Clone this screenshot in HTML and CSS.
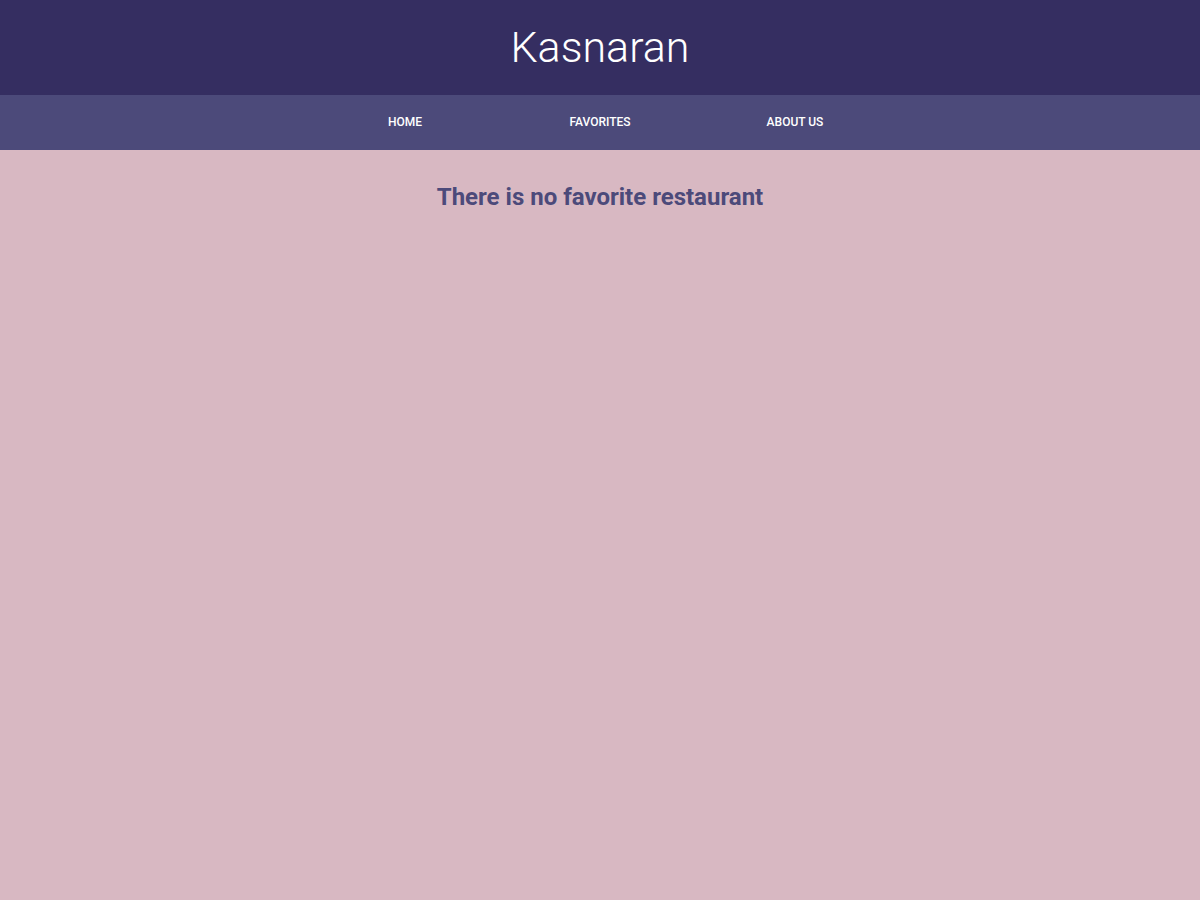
FILE: index.html
```html
<!DOCTYPE html>
<html lang="en">
<head>
<meta charset="utf-8">
<title>Kasnaran</title>
<link rel="stylesheet" href="styles.css">
</head>
<body>
<header class="app-bar">
  <h1 class="app-title">Kasnaran</h1>
</header>
<nav class="nav">
  <ul class="nav-list">
    <li class="nav-item"><a href="#" class="nav-link">HOME</a></li>
    <li class="nav-item"><a href="#" class="nav-link">FAVORITES</a></li>
    <li class="nav-item"><a href="#" class="nav-link">ABOUT US</a></li>
  </ul>
</nav>
<main class="content">
  <h2 class="empty-msg">There is no favorite restaurant</h2>
</main>
</body>
</html>
```

FILE: styles.css
```css
html, body {
  margin: 0;
  padding: 0;
  height: 100%;
}
body {
  background: #d8b8c2;
  font-family: Roboto, "Liberation Sans", sans-serif;
}
.app-bar {
  background: #352e61;
  height: 95px;
  display: flex;
  align-items: center;
  justify-content: center;
}
.app-title {
  margin: 0;
  color: #ffffff;
  font-weight: 300;
  font-size: 43px;
  line-height: 1;
}
.nav {
  background: #4c4a7a;
  height: 55px;
}
.nav-list {
  list-style: none;
  margin: 0;
  padding: 0 0 4px;
  box-sizing: border-box;
  height: 100%;
  display: flex;
  justify-content: center;
  align-items: center;
}
.nav-item {
  width: 195px;
  text-align: center;
}
.nav-link {
  color: #ffffff;
  text-decoration: none;
  font-size: 12px;
  font-weight: 500;
}
.content {
  padding-top: 31px;
  text-align: center;
}
.empty-msg {
  margin: 0;
  color: #4c4a7a;
  font-size: 24px;
  font-weight: 700;
  line-height: 32px;
}
```
